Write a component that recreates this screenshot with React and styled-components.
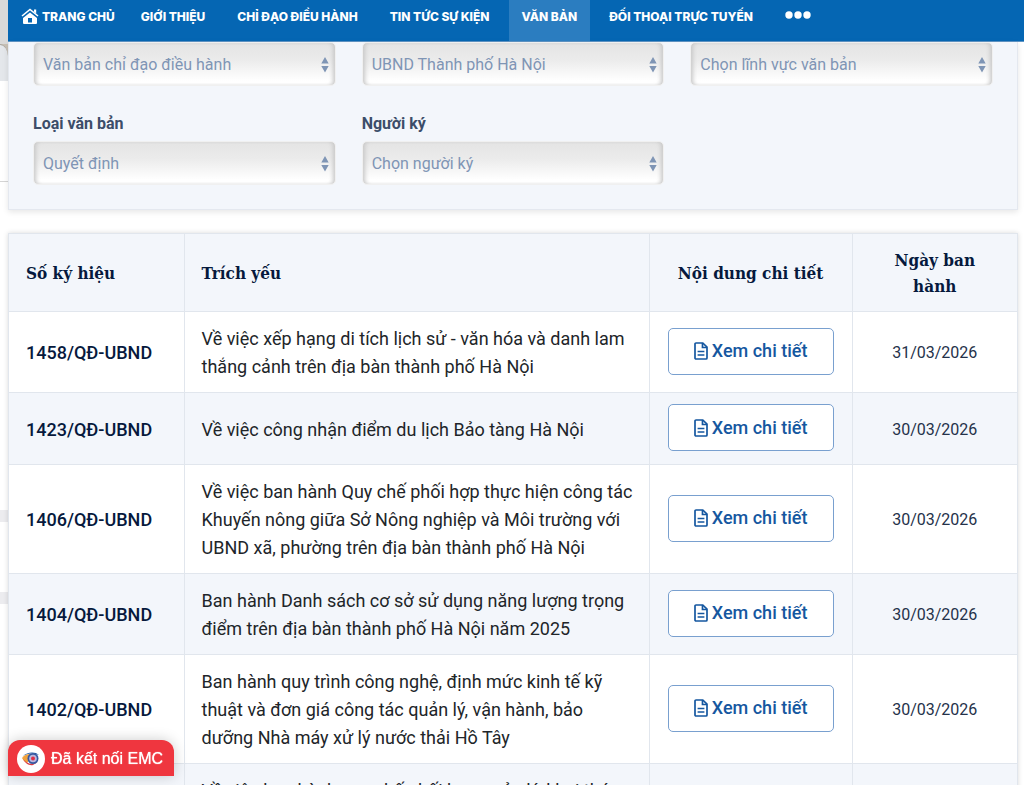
import React from "react";
import styled, { createGlobalStyle } from "styled-components";

const GlobalStyle = createGlobalStyle`
  * {
    box-sizing: border-box;
  }

  body {
    margin: 0;
    background: #fff;
    color: #212529;
    font-family: Roboto, "Noto Sans", sans-serif;
    font-size: 18px;
    line-height: 28px;
  }
`;

const Page = styled.div`
  display: flex;
  height: 100vh;
  overflow: hidden;
`;

const Backdrop = styled.div`
  flex: 0 0 8px;
  display: flex;
  flex-direction: column;
  background: #fff;
`;

const BackdropPart = styled.div`
  flex: 0 0 ${(props) => props.$height}px;
  background: ${(props) => props.$color || "#fff"};
`;

const BackdropCorner = styled.div`
  flex: 0 0 37px;
  background: #c9c1b6;

  &::before {
    content: "";
    display: block;
    height: 100%;
    background: #e4e7eb;
    border-top: 1px solid #a9a59e;
    border-top-right-radius: 8px 12px;
  }
`;

const Main = styled.main`
  flex: 1;
  min-width: 0;
`;

const NavBar = styled.nav`
  display: flex;
  height: 42px;
  background: #0566b3;
  border-bottom: 1px solid #5f94c4;
`;

const NavLink = styled.a`
  display: flex;
  align-items: center;
  gap: 3px;
  padding: 0 13px 8px;
  margin-right: ${(props) => props.$gap || 0}px;
  background: ${(props) => (props.$active ? "#2b7dc0" : "transparent")};
  color: #fff;
  font-family: Inter, sans-serif;
  font-size: 12px;
  font-weight: 800;
  line-height: 20px;
  text-decoration: none;
  white-space: nowrap;
`;

const MoreButton = styled.button`
  padding: 0 13px 12px;
  border: 0;
  background: transparent;
  color: #fff;
`;

const SearchPanel = styled.form`
  display: grid;
  grid-template-columns: repeat(3, 1fr);
  column-gap: 26px;
  row-gap: 26px;
  margin-right: 6px;
  padding: 0 24px 24px;
  background: #f3f6fb;
  border: 1px solid #e4e8ef;
  border-top: 0;
  box-shadow: 0 2px 6px rgba(0, 0, 0, 0.1);
`;

const Field = styled.div`
  display: flex;
  flex-direction: column;
`;

const Label = styled.label`
  color: #3c4d69;
  font-size: 16px;
  font-weight: 700;
  line-height: 24px;
  margin-bottom: 5px;
`;

const SelectWrap = styled.div`
  position: relative;
  color: #7f95b5;

  svg {
    position: absolute;
    top: 15px;
    right: 7px;
    pointer-events: none;
  }
`;

const Select = styled.select`
  appearance: none;
  width: 100%;
  height: 44px;
  padding: 2px 24px 0 9px;
  border: 1px solid #f0f0f0;
  border-radius: 5px;
  background: linear-gradient(#e4e4e4, #ebebeb 40%, #fff 90%);
  box-shadow:
    inset 4px 0 4px -2px #c8c8c8,
    inset -4px 0 4px -2px #c8c8c8;
  color: inherit;
  font: inherit;
  font-size: 16px;
`;

const Documents = styled.table`
  width: calc(100% - 6px);
  margin-top: 23px;
  border-collapse: collapse;
  table-layout: fixed;
  box-shadow: 0 0 5px rgba(0, 0, 0, 0.15);
`;

const Column = styled.col`
  width: ${(props) => props.$width || "auto"};
`;

const Row = styled.tr`
  background: ${(props) => (props.$shaded ? "#f3f6fb" : "#fff")};
`;

const HeadCell = styled.th`
  height: 78px;
  padding: 0 ${(props) => (props.$align ? 24 : 17)}px;
  border: 1px solid #e1e6ed;
  color: #06193d;
  font-family: "DejaVu Serif Condensed", "DejaVu Serif", serif;
  font-size: 17px;
  font-weight: 700;
  line-height: 26px;
  text-align: ${(props) => props.$align || "left"};
`;

const Cell = styled.td`
  padding: 13px 12px 11px 17px;
  border: 1px solid #e1e6ed;
`;

const CodeCell = styled(Cell)`
  color: #06193d;
  font-weight: 500;
`;

const ActionCell = styled(Cell)`
  padding: 11px 18px 13px;
`;

const DateCell = styled(Cell)`
  padding: 13px 12px 11px;
  color: #25324a;
  font-size: 16px;
  text-align: center;
`;

const DetailButton = styled.button`
  display: flex;
  align-items: center;
  justify-content: center;
  gap: 4px;
  width: 100%;
  height: 47px;
  padding: 0;
  border: 1px solid #79a0cf;
  border-radius: 5px;
  background: #fff;
  color: #1557a0;
  font: inherit;
  font-weight: 500;
  white-space: nowrap;
`;

const StatusBadge = styled.div`
  position: fixed;
  z-index: 3;
  bottom: 9px;
  left: 8px;
  display: flex;
  align-items: center;
  gap: 6px;
  height: 36px;
  padding: 2px 11px 0 9px;
  border-radius: 12px 12px 0 0;
  background: #ef363f;
  box-shadow: 0 0 14px rgba(0, 0, 0, 0.2);
  color: #fff;
  font-family: "Liberation Sans", sans-serif;
  font-size: 16px;
  text-shadow: 0 0 1px #fff;
  white-space: nowrap;
`;

const menu = [
  { label: "GIỚI THIỆU" },
  { label: "CHỈ ĐẠO ĐIỀU HÀNH" },
  { label: "TIN TỨC SỰ KIỆN" },
  { label: "VĂN BẢN", active: true },
  { label: "ĐỐI THOẠI TRỰC TUYẾN" },
];

const documents = [
  {
    code: "1458/QĐ-UBND",
    title:
      "Về việc xếp hạng di tích lịch sử - văn hóa và danh lam thắng cảnh trên địa bàn thành phố Hà Nội",
    date: "31/03/2026",
  },
  {
    code: "1423/QĐ-UBND",
    title: "Về việc công nhận điểm du lịch Bảo tàng Hà Nội",
    date: "30/03/2026",
  },
  {
    code: "1406/QĐ-UBND",
    title:
      "Về việc ban hành Quy chế phối hợp thực hiện công tác Khuyến nông giữa Sở Nông nghiệp và Môi trường với UBND xã, phường trên địa bàn thành phố Hà Nội",
    date: "30/03/2026",
  },
  {
    code: "1404/QĐ-UBND",
    title:
      "Ban hành Danh sách cơ sở sử dụng năng lượng trọng điểm trên địa bàn thành phố Hà Nội năm 2025",
    date: "30/03/2026",
  },
  {
    code: "1402/QĐ-UBND",
    title:
      "Ban hành quy trình công nghệ, định mức kinh tế kỹ thuật và đơn giá công tác quản lý, vận hành, bảo dưỡng Nhà máy xử lý nước thải Hồ Tây",
    date: "30/03/2026",
  },
  {
    code: "1401/QĐ-UBND",
    title:
      "Về việc ban hành quy chế phối hợp quản lý, khai thác và bảo vệ công trình hạ tầng kỹ thuật trên địa bàn thành phố Hà Nội giai đoạn 2026 - 2030",
    date: "30/03/2026",
  },
];

const HomeIcon = () => (
  <svg width="18" height="17" viewBox="0 0 18 17" fill="none">
    <path d="M1 8 9 1.5 17 8" stroke="#fff" strokeWidth="1.6" />
    <path d="M13 1.5h2.2v4L13 3.8z" fill="#fff" />
    <path
      fillRule="evenodd"
      d="M9 4.6 2 10v5a1 1 0 0 0 1 1h12a1 1 0 0 0 1-1v-5zM7 10h4v4.5H7z"
      fill="#fff"
    />
  </svg>
);

const DotsIcon = () => (
  <svg width="26" height="8" viewBox="0 0 26 8" fill="#fff">
    <circle cx="4" cy="4" r="3.7" />
    <circle cx="13" cy="4" r="3.7" />
    <circle cx="22" cy="4" r="3.7" />
  </svg>
);

const ArrowsIcon = () => (
  <svg width="8" height="16" viewBox="0 0 8 16" fill="currentColor">
    <path d="M4 0 7.7 6.5H.3zM4 15.5.3 9h7.4z" />
  </svg>
);

const FileIcon = () => (
  <svg
    width="14"
    height="18"
    viewBox="0 0 14 18"
    fill="none"
    stroke="currentColor"
    strokeWidth="1.7"
  >
    <path d="M2 1h6.8L13 5.2V16a1 1 0 0 1-1 1H2a1 1 0 0 1-1-1V2a1 1 0 0 1 1-1z" />
    <path d="M8.5 1v4.5H13M3.6 9.5h6.8M3.6 13h6.8" />
  </svg>
);

const EyeLogo = () => (
  <svg width="28" height="28" viewBox="0 0 28 28">
    <circle cx="14" cy="14" r="14" fill="#fff" />
    <path d="M6 11C10 7 18 6 22 10l-4-1c-5-1-8 0-12 2z" fill="#1f5ba8" />
    <path d="M5 13c3-4 8-5 12-3l-7 8c-2-1-4-3-5-5z" fill="#f0a23c" />
    <path d="M6 14c4 5 9 6 15 3l-5 3c-4 1-8-2-10-6z" fill="#d83a43" />
    <circle cx="16" cy="13.5" r="5.5" fill="#3557a0" />
    <circle cx="16" cy="13.5" r="3.8" fill="#b9b8df" />
    <circle cx="16" cy="13.5" r="2" fill="#df3047" />
  </svg>
);

const SelectField = ({ id, label, value, hiddenLabel }) => (
  <Field>
    {!hiddenLabel && <Label htmlFor={id}>{label}</Label>}
    <SelectWrap>
      <Select id={id} aria-label={hiddenLabel ? label : undefined}>
        <option>{value}</option>
      </Select>
      <ArrowsIcon />
    </SelectWrap>
  </Field>
);

const App = () => {
  return (
    <>
      <GlobalStyle />
      <Page>
        <Backdrop>
          <BackdropPart $height={44} $color="#d9d9d9" />
          <BackdropCorner />
          <BackdropPart $height={100} />
          <BackdropPart $height={1} $color="#d5d5d5" />
          <BackdropPart $height={328} />
          <BackdropPart $height={12} $color="#ececef" />
          <BackdropPart $height={70} />
          <BackdropPart $height={12} $color="#ececef" />
        </Backdrop>
        <Main>
          <NavBar>
            <NavLink href="#">
              <HomeIcon />
              TRANG CHỦ
            </NavLink>
            {menu.map((item) => (
              <NavLink
                key={item.label}
                href="#"
                $gap={6}
                $active={item.active}
              >
                {item.label}
              </NavLink>
            ))}
            <MoreButton type="button" aria-label="Thêm">
              <DotsIcon />
            </MoreButton>
          </NavBar>

          <SearchPanel>
            <SelectField
              id="group"
              label="Nhóm văn bản"
              value="Văn bản chỉ đạo điều hành"
              hiddenLabel
            />
            <SelectField
              id="agency"
              label="Cơ quan ban hành"
              value="UBND Thành phố Hà Nội"
              hiddenLabel
            />
            <SelectField
              id="topic"
              label="Lĩnh vực"
              value="Chọn lĩnh vực văn bản"
              hiddenLabel
            />
            <SelectField id="type" label="Loại văn bản" value="Quyết định" />
            <SelectField id="signer" label="Người ký" value="Chọn người ký" />
          </SearchPanel>

          <Documents>
            <colgroup>
              <Column $width="17.4%" />
              <Column $width="46.1%" />
              <Column $width="20.1%" />
              <Column />
            </colgroup>
            <thead>
              <Row $shaded>
                <HeadCell>Số ký hiệu</HeadCell>
                <HeadCell>Trích yếu</HeadCell>
                <HeadCell $align="center">Nội dung chi tiết</HeadCell>
                <HeadCell $align="center">Ngày ban hành</HeadCell>
              </Row>
            </thead>
            <tbody>
              {documents.map((doc, index) => (
                <Row key={doc.code} $shaded={index % 2 === 1}>
                  <CodeCell>{doc.code}</CodeCell>
                  <Cell>{doc.title}</Cell>
                  <ActionCell>
                    <DetailButton type="button">
                      <FileIcon />
                      Xem chi tiết
                    </DetailButton>
                  </ActionCell>
                  <DateCell>{doc.date}</DateCell>
                </Row>
              ))}
            </tbody>
          </Documents>
        </Main>
      </Page>
      <StatusBadge role="status">
        <EyeLogo />
        Đã kết nối EMC
      </StatusBadge>
    </>
  );
};

export default App;
